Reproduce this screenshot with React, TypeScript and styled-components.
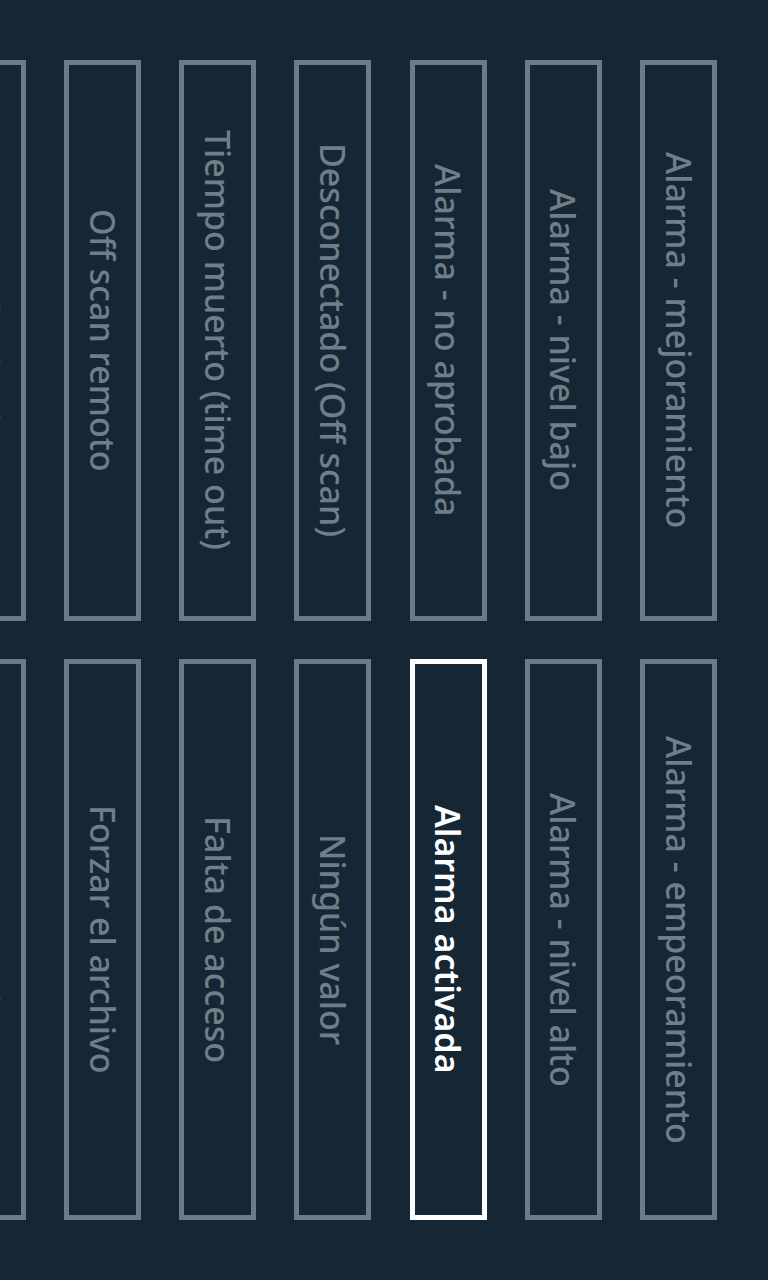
import React from "react";
import styled, { createGlobalStyle } from "styled-components";

const Global = createGlobalStyle`
  html, body {
    margin: 0;
    padding: 0;
    background: #152634;
    overflow: hidden;
  }
`;

const Page = styled.div`
  width: 768px;
  height: 1280px;
  box-sizing: border-box;
  writing-mode: vertical-rl;
  background: #152634;
  overflow: hidden;
  padding-block-start: 51px;
  padding-inline-start: 59.5px;
  display: grid;
  grid-template-columns: 561px 561px;
  grid-auto-rows: 77px;
  column-gap: 38.5px;
  row-gap: 38.2px;
  align-content: start;
  justify-content: start;
  font-family: "Noto Sans", "Open Sans", sans-serif;
`;

const StateButton = styled.button<{ $active?: boolean }>`
  writing-mode: vertical-rl;
  box-sizing: border-box;
  margin: 0;
  padding: 0;
  background: transparent;
  border: 5px solid ${(p) => (p.$active ? "#ffffff" : "#6c7b85")};
  color: ${(p) => (p.$active ? "#ffffff" : "#6f7e88")};
  font-family: inherit;
  font-size: 34px;
  font-weight: ${(p) => (p.$active ? 600 : 500)};
  display: flex;
  align-items: center;
  justify-content: center;
  white-space: nowrap;
  cursor: pointer;
`;

const items: { label: string; active?: boolean }[] = [
  { label: "Alarma - mejoramiento" },
  { label: "Alarma - empeoramiento" },
  { label: "Alarma - nivel bajo" },
  { label: "Alarma - nivel alto" },
  { label: "Alarma - no aprobada" },
  { label: "Alarma activada", active: true },
  { label: "Desconectado (Off scan)" },
  { label: "Ningún valor" },
  { label: "Tiempo muerto (time out)" },
  { label: "Falta de acceso" },
  { label: "Off scan remoto" },
  { label: "Forzar el archivo" },
  { label: "Supresión de alarma" },
  { label: "Ajuste manual activo" },
];

export default function App() {
  return (
    <>
      <Global />
      <Page>
        {items.map((it) => (
          <StateButton key={it.label} $active={it.active}>
            {it.label}
          </StateButton>
        ))}
      </Page>
    </>
  );
}
